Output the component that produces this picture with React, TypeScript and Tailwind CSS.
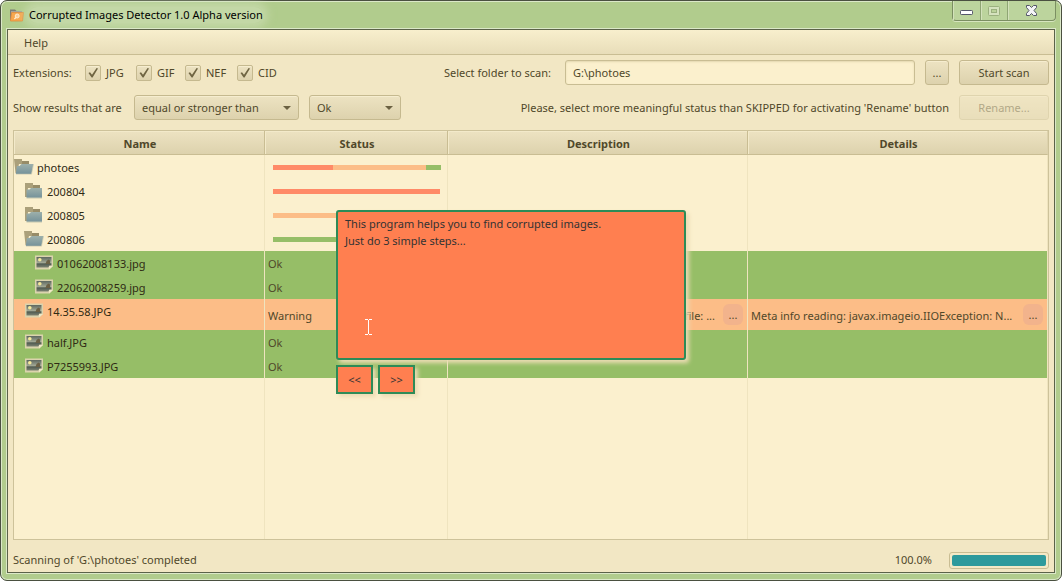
import React, { useState } from 'react';

type Status = 'Ok' | 'Warning';
type Segment = { color: string; width: number };
type Row = {
  name: string;
  level: number;
  icon: 'open' | 'closed' | 'image';
  bar?: Segment[];
  status?: Status;
  description?: string;
  details?: string;
};

const RED = '#ff8a67';
const ORANGE = '#fcbd87';
const GREEN = '#96be67';

const rows: Row[] = [
  {
    name: 'photoes',
    level: 0,
    icon: 'open',
    bar: [
      { color: RED, width: 60 },
      { color: ORANGE, width: 93 },
      { color: GREEN, width: 15 },
    ],
  },
  { name: '200804', level: 1, icon: 'closed', bar: [{ color: RED, width: 167 }] },
  { name: '200805', level: 1, icon: 'closed', bar: [{ color: ORANGE, width: 167 }] },
  { name: '200806', level: 1, icon: 'open', bar: [{ color: GREEN, width: 167 }] },
  { name: '01062008133.jpg', level: 2, icon: 'image', status: 'Ok' },
  { name: '22062008259.jpg', level: 2, icon: 'image', status: 'Ok' },
  {
    name: '14.35.58.JPG',
    level: 1,
    icon: 'image',
    status: 'Warning',
    description: 'file: ...',
    details: 'Meta info reading: javax.imageio.IIOException: N...',
  },
  { name: 'half.JPG', level: 1, icon: 'image', status: 'Ok' },
  { name: 'P7255993.JPG', level: 1, icon: 'image', status: 'Ok' },
];

const indent = ['pl-0', 'pl-[10px]', 'pl-5'];

const buttonClass =
  'flex items-center justify-center rounded-[3px] border border-[#c5b98f] bg-linear-to-b from-[#ede3c2] to-[#ddd2ad] text-[#50482a] shadow-[inset_0_1px_0_#f6edcf]';

function AppIcon() {
  return (
    <svg width="16" height="16" viewBox="0 0 16 16" aria-hidden="true">
      <path d="M1 2.5h5l1.5 1.5H13v9H1z" fill="#7d7f76" />
      <path d="M2 4h11v2H2z" fill="#a5a59a" />
      <path d="M2.5 5.5h12l-1 8.5h-12z" fill="#f7a74e" stroke="#e28d3b" strokeWidth="0.8" />
      <circle cx="8.2" cy="9" r="2" fill="#fbd29c" stroke="#fff3de" strokeWidth="0.9" />
      <path d="M6.8 10.5L5.4 12" stroke="#fff3de" strokeWidth="1.1" />
    </svg>
  );
}

function FolderIcon({ open }: { open: boolean }) {
  return (
    <svg width="20" height="16" viewBox="0 0 20 16" className="shrink-0" aria-hidden="true">
      <defs>
        <linearGradient id="folderFace" x1="0" y1="0" x2="0" y2="1">
          <stop offset="0" stopColor="#9db0ab" />
          <stop offset="1" stopColor="#75929a" />
        </linearGradient>
      </defs>
      {open ? (
        <>
          <path d="M0 0h8v2h7v3H5L3 14H1.5z" fill="#aba07a" />
          <path d="M8 2h7v3H8z" fill="#978c68" />
          <path d="M6.500 6l1-1H19.500L17.500 15H1.800l1-8h2.700z" fill="url(#folderFace)" />
          <path d="M2 15.200h15.500L19.500 5.300" stroke="#cfcdb0" fill="none" strokeWidth="0.700" />
        </>
      ) : (
        <>
          <path d="M1 0h8v2h7v3H4L3 14H1z" fill="#aba07a" />
          <path d="M9 2h7v3H9z" fill="#978c68" />
          <path d="M2.500 6.500h3L7 5h11v9.800H2.500z" fill="url(#folderFace)" />
          <path d="M2.500 15.200H18" stroke="#c4c6ad" strokeWidth="0.700" />
        </>
      )}
    </svg>
  );
}

function ImageIcon() {
  return (
    <svg width="20" height="16" viewBox="0 0 20 16" className="shrink-0" aria-hidden="true">
      <defs>
        <linearGradient id="sky" x1="0" y1="0" x2="0" y2="1">
          <stop offset="0" stopColor="#5d675f" />
          <stop offset="0.550" stopColor="#a3a995" />
          <stop offset="0.650" stopColor="#4f5a50" />
          <stop offset="1" stopColor="#7d8373" />
        </linearGradient>
      </defs>
      <path d="M1 0.500h18V11l-3.500 3.500H1z" fill="#dbd3ad" />
      <path d="M2.500 2h15v8.500h-2l-1.200 2H2.500z" fill="url(#sky)" />
      <circle cx="5.800" cy="4.800" r="1.800" fill="#f4e99a" />
      <path d="M11.500 9l1-3 2-1.500 1.500 1V9z" fill="#6b6044" />
      <path d="M15 14.500V11h4z" fill="#efe8c6" />
    </svg>
  );
}

function Check({ label, width }: { label: string; width: string }) {
  return (
    <label className={`flex items-center gap-[5px] ${width}`}>
      <span className="relative size-4">
        <input
          type="checkbox"
          defaultChecked
          className="peer block size-4 appearance-none rounded-[2px] border border-[#c5b98f] bg-linear-to-b from-[#ede3c2] to-[#ddd2ad] shadow-[inset_0_1px_0_#f6edcf]"
        />
        <svg
          viewBox="0 0 16 16"
          className="pointer-events-none absolute inset-0 hidden size-4 peer-checked:block"
          aria-hidden="true"
        >
          <path d="M3.500 8l1.500-.8 2 2.600L11.600 3l1.400.6L7.600 12.500h-1z" fill="#6f6543" />
        </svg>
      </span>
      {label}
    </label>
  );
}

function Choice({ label, options, width }: { label: string; options: string[]; width: string }) {
  return (
    <span className={`relative ${width}`}>
      <select
        aria-label={label}
        className="h-[25px] w-full appearance-none rounded-[3px] border border-[#c5b98f] bg-linear-to-b from-[#ede3c2] to-[#ddd2ad] px-[7px] text-[#50482a] shadow-[inset_0_1px_0_#f6edcf]"
      >
        {options.map((o) => (
          <option key={o}>{o}</option>
        ))}
      </select>
      <svg
        viewBox="0 0 8 4"
        className="pointer-events-none absolute top-[11px] right-2 h-1 w-2"
        aria-hidden="true"
      >
        <path d="M0 0h8L4 4z" fill="#6b6142" />
      </svg>
    </span>
  );
}

function MoreButton({ label }: { label: string }) {
  return (
    <button
      type="button"
      aria-label={label}
      className="h-[21px] w-5 shrink-0 rounded-md bg-[#f2b38c] leading-none text-[#50482a]"
    >
      ...
    </button>
  );
}

function WindowControls() {
  return (
    <div className="flex h-5 items-stretch self-start rounded-b-[4px] border border-t-0 border-[#7b8f62] bg-[#bcd49d] shadow-[0_1px_0_#d7e6bf]">
      <button
        type="button"
        aria-label="Minimize"
        className="flex w-7 items-center justify-center border-r border-[#8fa574] shadow-[inset_1px_0_0_#d3e2bb]"
      >
        <svg width="13" height="6" viewBox="0 0 13 6" className="mt-1">
          <rect x="0.500" y="0.500" width="12" height="4" rx="0.800" fill="#fff" stroke="#54576a" />
        </svg>
      </button>
      <button
        type="button"
        aria-label="Maximize"
        disabled
        className="flex w-[27px] items-center justify-center border-r border-[#8fa574] shadow-[inset_1px_0_0_#d3e2bb]"
      >
        <svg width="12" height="10" viewBox="0 0 12 10">
          <rect x="0.500" y="0.500" width="11" height="9" rx="1" fill="#d5e2be" stroke="#9bb07f" />
          <rect x="3.500" y="3.500" width="5" height="3" fill="#bad29a" stroke="#9bb07f" />
        </svg>
      </button>
      <button
        type="button"
        aria-label="Close"
        className="flex w-[47px] items-center justify-center shadow-[inset_1px_0_0_#d3e2bb]"
      >
        <svg width="13" height="11" viewBox="0 0 13 11">
          <path
            d="M1.500 0.500H4.500L6.500 2.500 8.500 0.500H11.500V2.500L9 5.500 11.500 8.500V10.500H8.500L6.500 8.500 4.500 10.500H1.500V8.500L4 5.500 1.500 2.500z"
            fill="#f4f4f6"
            stroke="#54576a"
            strokeLinejoin="round"
          />
        </svg>
      </button>
    </div>
  );
}

function ResultRow({ row }: { row: Row }) {
  const tone =
    row.status === 'Ok'
      ? 'h-6 bg-[#96be67]'
      : row.status === 'Warning'
        ? 'h-[31px] bg-[#fcbd87]'
        : 'h-6';
  return (
    <tr className={tone}>
      <td className="border-r border-[#efe4bf] p-0 align-top">
        <div className={`flex h-6 items-center gap-[3px] text-[#2f2a14] ${indent[row.level]}`}>
          {row.icon === 'image' ? <ImageIcon /> : <FolderIcon open={row.icon === 'open'} />}
          <span className="pt-0.5">{row.name}</span>
        </div>
      </td>
      <td className="border-r border-[#efe4bf] p-0 pl-[3px]">
        {row.bar ? (
          <div className="flex h-[5px] pl-[5px]">
            {row.bar.map((s) => (
              <span key={s.color} style={{ width: s.width, backgroundColor: s.color }} />
            ))}
          </div>
        ) : (
          <div className="pt-0.5">{row.status}</div>
        )}
      </td>
      <td className="border-r border-[#efe4bf] p-0 px-1">
        {row.description && (
          <div className="flex items-center justify-end gap-2">
            <span className="truncate pt-0.5">{row.description}</span>
            <MoreButton label="Show full description" />
          </div>
        )}
      </td>
      <td className="border-r border-[#efe4bf] p-0 pr-1 pl-[3px]">
        {row.details && (
          <div className="flex items-center justify-between gap-2">
            <span className="truncate pt-0.5">{row.details}</span>
            <MoreButton label="Show full details" />
          </div>
        )}
      </td>
    </tr>
  );
}

function HelpPopup() {
  const text = 'This program helps you to find corrupted images.\nJust do 3 simple steps...';
  const step =
    'h-[29px] w-[37px] border-2 border-[#2e8b57] bg-[#ff7f50] text-[#333] shadow-[3px_3px_4px_#ecdcb4]';
  return (
    <section aria-label="Introduction" className="absolute top-[210px] left-[336px] w-[350px]">
      <textarea
        readOnly
        aria-label="Tutorial text"
        value={text}
        className="block h-[150px] w-full resize-none rounded-[3px] border-2 border-[#2e8b57] bg-[#ff7f50] px-[7px] py-[3px] leading-[17px] text-[#333] shadow-[3px_3px_4px_#ecdcb4] outline-none"
      />
      <svg
        width="7"
        height="16"
        viewBox="0 0 7 16"
        className="absolute top-[109px] left-[29px]"
        aria-hidden="true"
      >
        <path d="M0 .5h3M4 .5h3M3.500 1v14M0 15.500h3M4 15.500h3" stroke="#fff" fill="none" />
      </svg>
      <div className="mt-[5px] flex gap-[5px]">
        <button type="button" className={step}>
          &lt;&lt;
        </button>
        <button type="button" className={step}>
          &gt;&gt;
        </button>
      </div>
    </section>
  );
}

const headers = ['Name', 'Status', 'Description', 'Details'];

export default function App() {
  const [folder, setFolder] = useState('G:\\photoes');
  return (
    <div className="flex h-screen flex-col rounded-[7px] border border-[#4a5040] bg-[#b1cc8d] px-[5px] pb-[6px] font-['Noto_Sans',sans-serif] text-[11px] leading-4 text-[#50482a] shadow-[inset_0_0_0_1px_#dbe8c8]">
      <header className="flex h-[27px] items-center justify-between pl-[3px]">
        <h1 className="flex items-center gap-1 text-black">
          <AppIcon />
          <span className="rounded-full bg-[#cfe0b8]/60 shadow-[0_0_8px_5px_#cfe0b899]">
            Corrupted Images Detector 1.0 Alpha version
          </span>
        </h1>
        <WindowControls />
      </header>

      <div className="flex min-h-0 flex-1 flex-col border border-[#dbe8c8]">
        <div className="flex min-h-0 flex-1 flex-col border border-[#5b6249] bg-[#f2e7c4]">
          <nav className="flex h-[25px] items-center border-b border-[#c9bd93] bg-linear-to-b from-[#f8efcd] to-[#e8ddb9] px-4">
            <button type="button" className="pt-0.5">
              Help
            </button>
          </nav>

          <form className="flex flex-col gap-[10px] px-[5px] py-[5px]" onSubmit={(e) => e.preventDefault()}>
            <div className="flex h-[25px] items-center">
              <fieldset className="flex items-center">
                <legend className="float-left w-[72px]">Extensions:</legend>
                <Check label="JPG" width="w-[51px]" />
                <Check label="GIF" width="w-[49px]" />
                <Check label="NEF" width="w-[52px]" />
                <Check label="CID" width="w-[51px]" />
              </fieldset>
              <label htmlFor="folder" className="ml-auto">
                Select folder to scan:
              </label>
              <input
                id="folder"
                value={folder}
                onChange={(e) => setFolder(e.target.value)}
                className="ml-[14px] h-[25px] w-[350px] rounded-[3px] border border-[#c9bd93] bg-[#fbf0cd] px-[7px] text-[#50482a] shadow-[inset_0_1px_2px_#e3d7b0] outline-none"
              />
              <button type="button" aria-label="Browse" className={`ml-[10px] h-[25px] w-6 ${buttonClass}`}>
                ...
              </button>
              <button type="submit" className={`ml-[10px] h-[25px] w-[90px] ${buttonClass}`}>
                Start scan
              </button>
            </div>
            <div className="flex h-[25px] items-center gap-[10px]">
              <span className="w-[111px]">Show results that are</span>
              <Choice
                label="Comparison"
                options={['equal or stronger than', 'equal to', 'weaker than']}
                width="w-[165px]"
              />
              <Choice label="Status" options={['Ok', 'Warning', 'Error']} width="w-[92px]" />
              <span className="ml-auto">
                Please, select more meaningful status than SKIPPED for activating 'Rename' button
              </span>
              <button type="button" disabled className={`h-[25px] w-[90px] opacity-40 ${buttonClass}`}>
                Rename...
              </button>
            </div>
          </form>

          <div className="mx-[5px] mt-[5px] min-h-0 flex-1 border border-[#cdc29a] bg-[#fbf0ce]">
            <table className="h-full w-full table-fixed border-separate border-spacing-0">
              <colgroup>
                <col className="w-[251px]" />
                <col className="w-[183px]" />
                <col />
                <col />
              </colgroup>
              <thead>
                <tr className="h-6">
                  {headers.map((h) => (
                    <th
                      key={h}
                      scope="col"
                      className="border-r border-b border-[#c9bd93] bg-linear-to-b from-[#ede3c2] to-[#ddd2ad] p-0 pt-0.5 pl-0.5 font-bold shadow-[inset_1px_1px_0_#f3eaca] last:border-r-[#ddd2ad]"
                    >
                      {h}
                    </th>
                  ))}
                </tr>
              </thead>
              <tbody>
                {rows.map((r) => (
                  <ResultRow key={r.name} row={r} />
                ))}
                <tr aria-hidden="true">
                  {headers.map((h) => (
                    <td key={h} className="border-r border-[#efe4bf] p-0" />
                  ))}
                </tr>
              </tbody>
            </table>
          </div>

          <footer className="flex h-8 shrink-0 items-center px-[5px] pt-2">
            <span role="status">Scanning of 'G:\photoes' completed</span>
            <span className="ml-auto">100.0%</span>
            <div
              role="progressbar"
              aria-label="Scan progress"
              aria-valuenow={100}
              className="ml-[17px] h-[17px] w-[100px] rounded-[3px] border border-[#c9bd93] bg-[#f4e9c6] p-[2px]"
            >
              <div className="h-full w-full rounded-[2px] bg-[#2e9a9c]" />
            </div>
          </footer>
        </div>
      </div>
      <HelpPopup />
    </div>
  );
}
